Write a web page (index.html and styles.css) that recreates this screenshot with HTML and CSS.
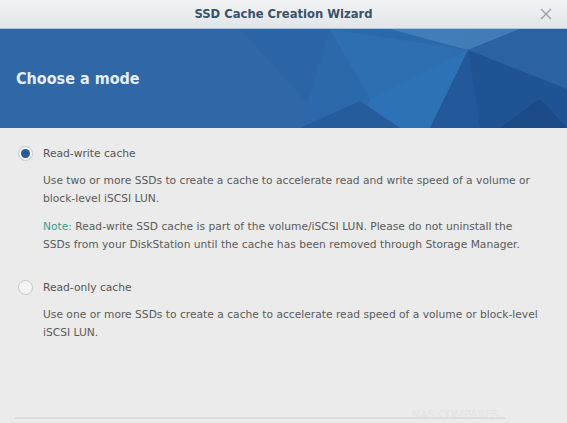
FILE: index.html
```html
<!DOCTYPE html>
<html>
<head>
    <title>SSD Cache Creation Wizard</title>
    <link rel="stylesheet" href="styles.css">
</head>
<body>
    <div class="wizard">
        <div class="title-bar">
            <span class="title">SSD Cache Creation Wizard</span>
            <svg class="close" width="12" height="12" viewBox="0 0 12 12">
                <path d="M1 1 L11 11 M11 1 L1 11" stroke="#a3a7ab" stroke-width="1.6"/>
            </svg>
        </div>
        <div class="banner">
            <!-- faceted background -->
            <svg class="facets" width="567" height="99" viewBox="0 0 567 99" preserveAspectRatio="none">
                <polygon points="240,0 567,0 567,99 330,99" fill="#2c64a4" opacity="0.6"/>
                <polygon points="330,0 470,0 400,99 300,99" fill="#2d6aab" opacity="0.8"/>
                <polygon points="390,0 468,21 520,0" fill="#4a86bf" opacity="0.7"/>
                <polygon points="468,21 520,0 567,0 567,60" fill="#2a62a2"/>
                <polygon points="330,0 468,21 370,70" fill="#2f70b3" opacity="0.8"/>
                <polygon points="468,21 370,70 360,99 430,99" fill="#2e73b8" opacity="0.9"/>
                <polygon points="468,21 430,99 480,99" fill="#23589a"/>
                <polygon points="468,21 567,60 567,99 480,99" fill="#1f5393"/>
                <polygon points="300,99 360,72 400,99" fill="#255c9c"/>
                <polygon points="500,99 540,70 567,99" fill="#1b4a86"/>
            </svg>
            <h1 class="banner-title">Choose a mode</h1>
        </div>
        <div class="content">
            <div class="option">
                <label class="radio-row">
                    <span class="radio checked"></span>
                    <span class="radio-label">Read-write cache</span>
                </label>
                <p class="desc">Use two or more SSDs to create a cache to accelerate read and write speed of a volume or <span class="nowrap">block-level</span> iSCSI LUN.</p>
                <p class="desc"><span class="note">Note:</span> Read-write SSD cache is part of the volume/iSCSI LUN. Please do not uninstall the<br>SSDs from your DiskStation until the cache has been removed through Storage Manager.</p>
            </div>
            <div class="option">
                <label class="radio-row">
                    <span class="radio"></span>
                    <span class="radio-label">Read-only cache</span>
                </label>
                <p class="desc">Use one or more SSDs to create a cache to accelerate read speed of a volume or <span class="nowrap">block-level</span> iSCSI LUN.</p>
            </div>
        </div>
        <div class="footer">
            <div class="footer-line"></div>
            <span class="watermark">NAS COMPARES</span>
        </div>
    </div>
</body>
</html>
```

FILE: styles.css
```css
body {
    margin: 0;
    background-color: #ebebeb;
    font-family: "DejaVu Sans", Verdana, sans-serif;
}

.wizard {
    width: 567px;
    height: 423px;
    display: flex;
    flex-direction: column;
    background-color: #ebebeb;
    overflow: hidden;
}

.title-bar {
    height: 28px;
    display: flex;
    align-items: center;
    justify-content: center;
    position: relative;
    background: linear-gradient(#f1f3f4, #e3e6e8);
    border-bottom: 1px solid #a9c4dc;
}

.title {
    font-size: 11.6px;
    font-weight: bold;
    color: #3c5168;
}

.close {
    position: absolute;
    right: 15px;
    top: 8px;
}

.banner {
    position: relative;
    height: 99px;
    background-color: #2f67a7;
    display: flex;
    align-items: center;
}

.facets {
    position: absolute;
    left: 0;
    top: 0;
}

.banner-title {
    position: relative;
    margin: 0 0 0 16px;
    font-family: "DejaVu Sans Condensed", "DejaVu Sans", sans-serif;
    font-size: 16px;
    font-weight: bold;
    color: #e6eef7;
}

.content {
    flex: 1;
    padding: 16px 20px 0 18px;
}

.option {
    margin-bottom: 24px;
}

.radio-row {
    display: flex;
    align-items: center;
    gap: 10px;
    height: 18px;
}

.radio {
    width: 13px;
    height: 13px;
    border: 1px solid #c4c7ca;
    border-radius: 50%;
    background-color: #f4f4f4;
    display: flex;
    align-items: center;
    justify-content: center;
}

.radio.checked::after {
    content: "";
    width: 9px;
    height: 9px;
    border-radius: 50%;
    background-color: #2a5b97;
}

.radio-label {
    font-size: 10.7px;
    color: #555;
}

.desc {
    margin: 10px 0 0 25px;
    font-size: 10.7px;
    line-height: 18px;
    color: #5a5a5a;
}

.nowrap {
    white-space: nowrap;
}

.note {
    color: #3e9b8e;
}

.footer {
    height: 6px;
    position: relative;
}

.footer-line {
    margin: 0 62px 0 15px;
    height: 2px;
    background-color: #dcdcdc;
}

.watermark {
    position: absolute;
    right: 68px;
    bottom: 2px;
    font-size: 11px;
    color: #e4e4e4;
}
```
